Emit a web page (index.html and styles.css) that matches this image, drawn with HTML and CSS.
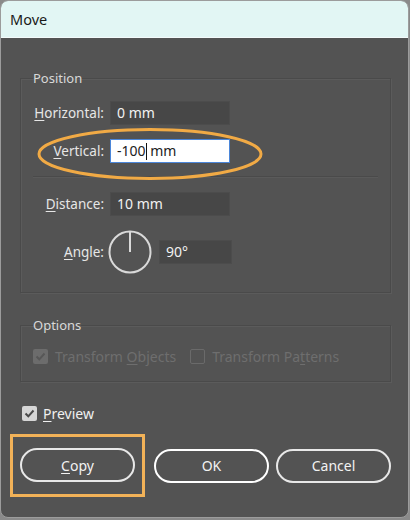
FILE: index.html
```html
<!DOCTYPE html>
<html>
<head>
<meta charset="utf-8">
<link rel="stylesheet" href="styles.css">
</head>
<body>
<div class="window">
  <div class="titlebar">Move</div>
  <div class="content">
    <fieldset class="group position">
      <legend>Position</legend>
      <div class="row">
        <span class="label"><u>H</u>orizontal:</span>
        <span class="field">0 mm</span>
      </div>
      <div class="row vertical">
        <span class="label"><u>V</u>ertical:</span>
        <span class="field active">-100<span class="caret"></span> mm</span>
        <svg class="ellipse" width="230" height="56" viewBox="0 0 230 56"><ellipse cx="115" cy="28" rx="111" ry="24.5" fill="none" stroke="#f1aa45" stroke-width="3"/></svg>
      </div>
      <div class="sep"></div>
      <div class="row">
        <span class="label"><u>D</u>istance:</span>
        <span class="field">10 mm</span>
      </div>
      <div class="row angle">
        <span class="label"><u>A</u>ngle:</span>
        <svg class="dial" width="44" height="44" viewBox="0 0 44 44"><circle cx="22" cy="22" r="20.5" fill="none" stroke="#d9d9d9" stroke-width="2"/><line x1="22" y1="2" x2="22" y2="22" stroke="#d9d9d9" stroke-width="2"/></svg>
        <span class="field small">90°</span>
      </div>
    </fieldset>
    <fieldset class="group options">
      <legend>Options</legend>
      <div class="checks">
        <span class="check disabled"><span class="box on"><svg width="15" height="15" viewBox="0 0 15 15"><path d="M3.5 7.5 L6.3 10.3 L11.5 4.5" fill="none" stroke="#575757" stroke-width="2"/></svg></span><span class="check-text">Transform <u>O</u>bjects</span></span>
        <span class="check disabled"><span class="box off"></span><span class="check-text">Transform Pa<u>t</u>terns</span></span>
      </div>
    </fieldset>
    <div class="preview">
      <span class="box light"><svg width="15" height="15" viewBox="0 0 15 15"><path d="M3.5 7.5 L6.3 10.3 L11.5 4.5" fill="none" stroke="#4a4a4a" stroke-width="2"/></svg></span>
      <span class="preview-text"><u>P</u>review</span>
    </div>
    <div class="buttons">
      <div class="highlight"><button class="btn"><u>C</u>opy</button></div>
      <button class="btn default">OK</button>
      <button class="btn cancel">Cancel</button>
    </div>
  </div>
</div>
</body>
</html>
```

FILE: styles.css
```css
html, body {
  margin: 0;
  padding: 0;
}
body {
  width: 410px;
  height: 520px;
  background: #8a8a8a;
  font-family: "Noto Sans", "Open Sans", sans-serif;
  overflow: hidden;
}
.window {
  width: 407px;
  height: 516px;
  background: #535353;
  border: 1px solid #9c9c9c;
  border-radius: 8px;
  overflow: hidden;
}
.titlebar {
  box-sizing: border-box;
  height: 37px;
  background: #e2f6f4;
  border-bottom: 1px solid #f4fbfb;
  color: #1a1a1a;
  font-size: 14.5px;
  line-height: 36px;
  padding-left: 9px;
}
.content {
  padding-top: 31px;
}
u {
  text-decoration: underline;
  text-underline-offset: 2px;
}
.group {
  margin: 0 17px 0 19px;
  padding: 0 12px;
  border: 1px solid #4a4a4a;
  box-shadow: 1px 1px 0 #5b5b5b, inset 1px 1px 0 #5b5b5b;
  min-width: 0;
}
.group legend {
  padding: 0;
  color: #d9d9d9;
  font-size: 13px;
  line-height: 18px;
}
.position {
  padding-top: 14px;
  padding-bottom: 18px;
}
.row {
  display: flex;
  align-items: center;
  height: 24px;
  font-size: 13.5px;
  color: #e6e6e6;
}
.row + .row {
  margin-top: 14px;
}
.label {
  width: 71px;
  text-align: right;
  margin-right: 6px;
  white-space: nowrap;
}
.field {
  box-sizing: border-box;
  width: 120px;
  height: 24px;
  background: #474747;
  border: 1px solid #4c4c4c;
  color: #f2f2f2;
  padding-left: 6px;
  line-height: 22px;
  font-size: 14px;
}
.field.active {
  background: #ffffff;
  border: 1px solid #4b86d9;
  color: #222222;
}
.caret {
  display: inline-block;
  width: 1px;
  height: 17px;
  background: #111;
  vertical-align: -4px;
}
.vertical {
  position: relative;
}
.ellipse {
  position: absolute;
  left: 2px;
  top: -13px;
}
.sep {
  height: 1px;
  background: #4a4a4a;
  border-bottom: 1px solid #5a5a5a;
  margin: 13px 0 14px;
}
.angle {
  height: 44px;
  margin-top: 14px !important;
}
.angle .label {
  margin-right: 4px;
}
.dial {
  margin-right: 7px;
}
.field.small {
  width: 73px;
}
.options {
  margin-top: 23px;
  padding-top: 12px;
  padding-bottom: 15px;
}
.checks {
  display: flex;
  align-items: center;
  height: 20px;
  font-size: 14px;
}
.check {
  display: flex;
  align-items: center;
  color: #6e6e6e;
}
.check-text {
  white-space: nowrap;
}
.check + .check {
  margin-left: 14px;
}
.box {
  box-sizing: border-box;
  width: 15px;
  height: 15px;
  margin-right: 7px;
  border-radius: 2px;
  display: inline-block;
  flex: none;
}
.box svg {
  display: block;
}
.box.on {
  background: #6c6c6c;
}
.box.off {
  border: 1px solid #6a6a6a;
}
.box.light {
  background: #d6d6d6;
  margin-right: 6px;
}
.preview {
  display: flex;
  align-items: center;
  margin: 23px 0 0 21px;
  height: 16px;
  color: #f0f0f0;
  font-size: 14px;
}
.buttons {
  display: flex;
  align-items: center;
  margin-top: 13px;
  margin-left: 9px;
}
.highlight {
  border: 3px solid #f2b258;
  padding: 11px 7px 12px 7px;
}
.btn {
  box-sizing: border-box;
  width: 115px;
  height: 34px;
  border: 2px solid #e8e8e8;
  border-radius: 17px;
  background: #535353;
  color: #f2f2f2;
  font-family: "Noto Sans", "Open Sans", sans-serif;
  font-size: 14px;
  padding: 0;
}
.btn.default {
  margin-left: 9px;
  border-width: 2.5px;
  border-color: #ffffff;
}
.btn.cancel {
  margin-left: 7px;
}
```
